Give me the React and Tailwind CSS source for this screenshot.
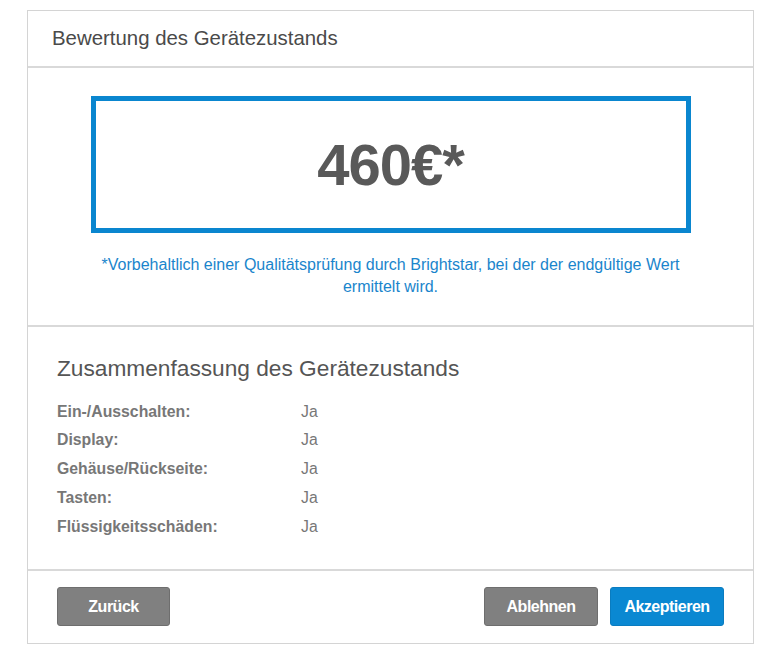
import React from "react";

const rows = [
  ["Ein-/Ausschalten:", "Ja"],
  ["Display:", "Ja"],
  ["Gehäuse/Rückseite:", "Ja"],
  ["Tasten:", "Ja"],
  ["Flüssigkeitsschäden:", "Ja"],
];

export default function App() {
  return (
    <div className="min-h-[651px] w-[782px] bg-white pt-[10px] pl-[27px] font-['Liberation_Sans',Arial,sans-serif]">
      <div className="w-[727px] h-[634px] border border-[#d4d4d4] flex flex-col">
        {/* Header */}
        <div className="h-[57px] border-b-2 border-[#d9d9d9] flex items-center pl-[24px]">
          <h1 className="text-[20.4px] text-[#4a4a4a]">Bewertung des Gerätezustands</h1>
        </div>

        {/* Price */}
        <div className="h-[259px] border-b-2 border-[#d9d9d9] pt-[28px] flex flex-col items-center">
          <div className="w-[600px] h-[137px] border-[5px] border-[#0a86cf] flex items-center justify-center">
            <span className="text-[58px] font-bold text-[#595959] tracking-[-1px]">460€*</span>
          </div>
          <p className="mt-[21px] w-[600px] text-center text-[16px] leading-[22px] text-[#1a85cc]">
            *Vorbehaltlich einer Qualitätsprüfung durch Brightstar, bei der der endgültige Wert ermittelt wird.
          </p>
        </div>

        {/* Summary */}
        <div className="h-[244px] border-b-2 border-[#d9d9d9] pl-[29px] pt-[26px]">
          <h2 className="text-[22.7px] text-[#555] leading-[30px]">Zusammenfassung des Gerätezustands</h2>
          <div className="mt-[14px] flex flex-col">
            {rows.map(([label, value]) => (
              <div key={label} className="flex h-[28.75px] items-center text-[15.8px]">
                <span className="w-[244px] font-bold text-[#777]">{label}</span>
                <span className="text-[#777]">{value}</span>
              </div>
            ))}
          </div>
        </div>

        {/* Footer */}
        <div className="flex-1 flex items-start justify-between pt-[16px] pl-[29px] pr-[29px]">
          <button className="w-[113px] h-[39px] rounded-[3px] bg-[#808080] border border-[#6e6e6e] text-white text-[16px] font-bold tracking-[-0.5px]">
            Zurück
          </button>
          <div className="flex gap-[12px]">
            <button className="w-[114px] h-[39px] rounded-[3px] bg-[#808080] border border-[#6e6e6e] text-white text-[16px] font-bold tracking-[-0.5px]">
              Ablehnen
            </button>
            <button className="w-[114px] h-[39px] rounded-[3px] bg-[#0a88d2] border border-[#0a7cc0] text-white text-[16px] font-bold tracking-[-0.5px]">
              Akzeptieren
            </button>
          </div>
        </div>
      </div>
    </div>
  );
}
